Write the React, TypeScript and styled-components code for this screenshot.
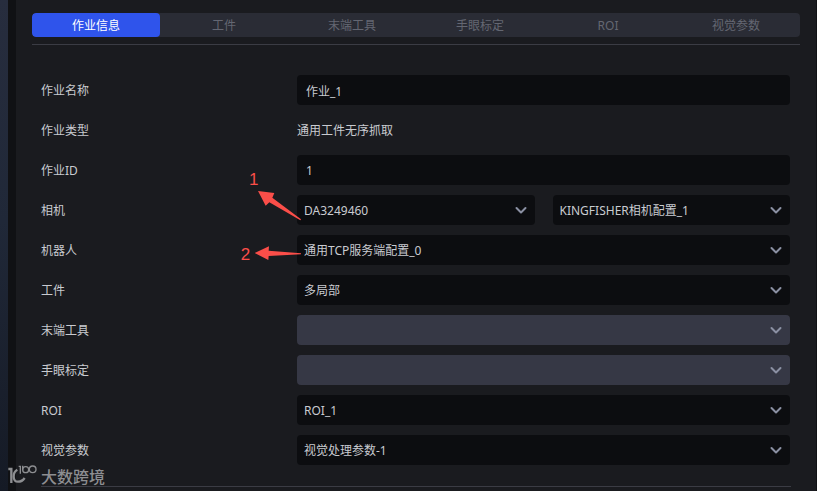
import React from 'react';
import styled, { createGlobalStyle, css } from 'styled-components';

const GlobalStyle = createGlobalStyle`
  * { box-sizing: border-box; }
  body {
    margin: 0;
    background: #101114;
    color: #c9cbd0;
    font: 12px/16px 'Noto Sans', 'Noto Sans CJK SC', sans-serif;
  }
  button, input, select { font: inherit; color: inherit; }
`;

const Page = styled.div`
  position: relative;
  display: flex;
  min-height: 100vh;
  padding-right: 1px;
  overflow: hidden;
`;

const Rail = styled.aside`
  width: 8px;
  margin-right: 8px;
  background: linear-gradient(#272d3e, #202838 45%, #151a25);
`;

const Panel = styled.main`
  flex: 1;
  min-width: 0;
  padding: 13px 16px 4px;
  background: #1a1b1f;
`;

const Tabs = styled.nav`
  display: flex;
  border-radius: 4px;
  overflow: hidden;
  background: #2a2c35;
`;

const Tab = styled.button<{ $active?: boolean }>`
  flex: 1;
  height: 24px;
  padding: 2px 0 0;
  border: 0;
  border-radius: ${(p) => (p.$active ? '4px' : '0')};
  background: ${(p) => (p.$active ? '#2f54eb' : 'transparent')};
  color: ${(p) => (p.$active ? '#ffffff' : '#646772')};
`;

const Rule = styled.hr<{ $inset?: boolean }>`
  height: 1px;
  border: 0;
  background: #3b3c44;
  margin: ${(p) => (p.$inset ? '21px 9px 0' : '7px 0 30px')};
`;

const Form = styled.form`
  display: grid;
  gap: 10px;
  padding: 0 10px 0 9px;
`;

const Row = styled.div`
  display: grid;
  grid-template-columns: 256px minmax(0, 1fr);
  align-items: center;
  height: 30px;
`;

const Controls = styled.div`
  position: relative;
  display: flex;
  gap: 18px;
`;

const Label = styled.label`
  padding-top: 2px;
`;

const StaticText = styled.span`
  padding-top: 2px;
`;

const control = css`
  width: 100%;
  height: 30px;
  border: 0;
  border-radius: 4px;
  background: #0c0d10;
  outline: none;
`;

const TextBox = styled.input`
  ${control}
  padding: 1px 9px 0;
`;

const SelectBox = styled.div`
  position: relative;
  flex: 1;
  min-width: 0;
`;

const Select = styled.select<{ $muted?: boolean }>`
  ${control}
  display: block;
  appearance: none;
  padding: 2px 28px 0 7px;
  ${(p) => p.$muted && 'background: #363845;'}
`;

const Chevron = styled.svg`
  position: absolute;
  right: 8px;
  top: 11px;
  width: 12px;
  height: 8px;
  pointer-events: none;
  fill: none;
  stroke: #8b90a3;
  stroke-width: 2;
  stroke-linecap: round;
  stroke-linejoin: round;
`;

const Callouts = styled.svg`
  position: absolute;
  z-index: 1;
  left: -67px;
  top: -45px;
  width: 80px;
  height: 130px;
  pointer-events: none;
  fill: #fb4e49;
  font: 51px 'Liberation Sans', sans-serif;
`;

const Watermark = styled.div`
  position: absolute;
  left: 8px;
  bottom: 4px;
  display: flex;
  align-items: center;
  gap: 4px;
  color: #8d8e91;
  font: 500 16px/22px 'Noto Sans CJK SC', sans-serif;
`;

const WatermarkLogo = styled.svg`
  width: 29px;
  height: 22px;
  fill: none;
  stroke: currentColor;
`;

type DropdownProps = { id?: string; label?: string; value?: string; muted?: boolean };

function Dropdown({ id, label, value = '', muted }: DropdownProps) {
  return (
    <SelectBox>
      <Select id={id} aria-label={label} $muted={muted} defaultValue={value}>
        <option value={value}>{value}</option>
      </Select>
      <Chevron viewBox="0 0 12 8" aria-hidden="true">
        <path d="M1.5 2 6 6.5 10.5 2" />
      </Chevron>
    </SelectBox>
  );
}

type FieldProps = { label: string; id?: string; children: React.ReactNode };

function Field({ label, id, children }: FieldProps) {
  return (
    <Row>
      {id ? <Label htmlFor={id}>{label}</Label> : <StaticText>{label}</StaticText>}
      <Controls>{children}</Controls>
    </Row>
  );
}

const tabs = ['作业信息', '工件', '末端工具', '手眼标定', 'ROI', '视觉参数'];

export default function App() {
  return (
    <Page>
      <GlobalStyle />
      <Rail />
      <Panel>
        <Tabs>
          {tabs.map((name, i) => (
            <Tab key={name} type="button" $active={i === 0}>{name}</Tab>
          ))}
        </Tabs>
        <Rule />
        <Form>
          <Field label="作业名称" id="name"><TextBox id="name" defaultValue="作业_1" /></Field>
          <Field label="作业类型"><StaticText>通用工件无序抓取</StaticText></Field>
          <Field label="作业ID" id="job-id"><TextBox id="job-id" defaultValue="1" /></Field>
          <Field label="相机" id="camera">
            <Dropdown id="camera" value="DA3249460" />
            <Dropdown label="相机配置" value="KINGFISHER相机配置_1" />
            <Callouts viewBox="0 0 240 390">
              <text x="57" y="105">1</text>
              <path d="M84 123 133 129 127 143 213 208 211 211 118 157 107 167Z" />
              <text x="32" y="330">2</text>
              <path d="M74 309 117 289 116 302 213 310V313L116 318 115 330Z" />
            </Callouts>
          </Field>
          <Field label="机器人" id="robot"><Dropdown id="robot" value="通用TCP服务端配置_0" /></Field>
          <Field label="工件" id="part"><Dropdown id="part" value="多局部" /></Field>
          <Field label="末端工具" id="tool"><Dropdown id="tool" muted /></Field>
          <Field label="手眼标定" id="calibration"><Dropdown id="calibration" muted /></Field>
          <Field label="ROI" id="roi"><Dropdown id="roi" value="ROI_1" /></Field>
          <Field label="视觉参数" id="vision"><Dropdown id="vision" value="视觉处理参数-1" /></Field>
        </Form>
        <Rule $inset />
      </Panel>
      <Watermark>
        <WatermarkLogo viewBox="0 0 87 66" aria-hidden="true">
          <path strokeWidth="7" d="M1 12H10V54" />
          <path strokeWidth="7" d="M28 14C13 22 13 50 30 50 40 50 46 45 50 39" />
          <path strokeWidth="4" d="M32 4H37V26" />
          <path strokeWidth="4" d="M44 2V14" />
          <circle strokeWidth="4" cx="53" cy="14" r="9" />
          <circle strokeWidth="4" cx="74" cy="13" r="10" />
        </WatermarkLogo>
        大数跨境
      </Watermark>
    </Page>
  );
}
